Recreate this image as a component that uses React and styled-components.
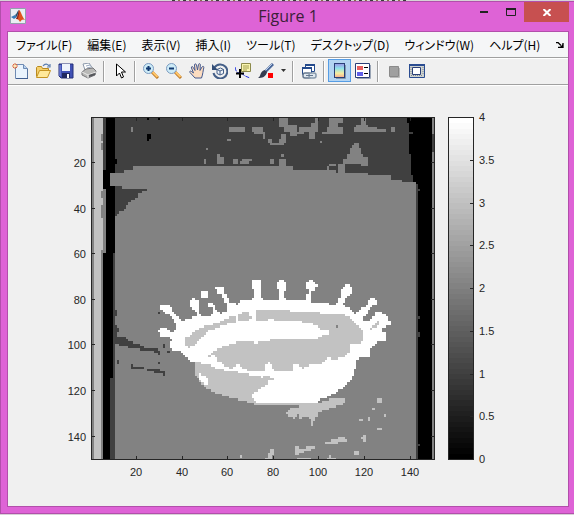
import React from "react";
import styled, { createGlobalStyle } from "styled-components";

const GlobalStyle = createGlobalStyle`
  * { box-sizing: border-box; }
  body { margin: 0; background: #d6d3d6; }
  button { font: inherit; color: inherit; border: 0; padding: 0; background: none; }
`;

const Desktop = styled.div`
  display: flex;
  flex-direction: column;
  min-height: 100vh;
  padding-bottom: 1px;
`;

/* sliver of the window behind, with the feet of its title text */
const BackWindow = styled.div`
  height: 1px;
  margin: 0 29% 0 30%;
  background: repeating-linear-gradient(90deg, #3a3a3a 0 3px, #d6d3d6 3px 6px, #8a6a4a 6px 8px, #d6d3d6 8px 11px);
`;

const Window = styled.main`
  flex: 1;
  display: flex;
  flex-direction: column;
  background: #de63d6;
  border: 1px solid #b24fab;
  border-right-width: 0;
  padding: 0 5px 6px 6px;
`;

const TitleBar = styled.header`
  display: grid;
  grid-template-columns: 1fr auto 1fr;
  align-items: start;
  height: 29px;
`;

const AppIcon = styled.span`
  display: flex;
  margin: 6px 0 0 3px;
`;

const Title = styled.h1`
  margin: 0;
  font: 400 16px/29px "Open Sans", "Noto Sans", sans-serif;
  color: #3c2039;
`;

const WindowButtons = styled.div`
  display: flex;
  justify-content: flex-end;
`;

const WindowButton = styled.button`
  display: flex;
  align-items: center;
  justify-content: center;
  width: ${(p) => (p.$close ? 45 : 27)}px;
  height: 20px;
  background: ${(p) => (p.$close ? "#c75050" : "transparent")};
`;

const Client = styled.div`
  flex: 1;
  display: flex;
  flex-direction: column;
  background: #f0f0f0;
  border: 1px solid #b24fab;
`;

const MenuBar = styled.nav`
  display: flex;
  align-items: center;
  height: 26px;
  padding: 0 4px 0 8px;
  background: #f5f6f7;
  border-bottom: 1px solid #a0a0a0;
`;

const MenuItem = styled.button`
  margin-right: 15px;
  font: 12px/24px "Noto Sans CJK JP", sans-serif;
  font-feature-settings: "palt";
  white-space: nowrap;
  color: #000;
`;

const DockButton = styled.button`
  display: flex;
  margin-left: auto;
`;

const ToolBar = styled.div`
  display: flex;
  align-items: flex-start;
  height: 27px;
  border-top: 1px solid #fff;
  border-bottom: 1px solid #a0a0a0;
`;

const ToolButton = styled.button`
  display: flex;
  align-items: center;
  justify-content: center;
  width: 23px;
  height: 23px;
  background: ${(p) => (p.$active ? "#b3d4f2" : "transparent")};
  border: 1px solid ${(p) => (p.$active ? "#569de5" : "transparent")};
`;

const CaretButton = styled(ToolButton)`
  width: 12px;
`;

const Separator = styled.span`
  width: 2px;
  height: 21px;
  margin: 2px 3px;
  background: #a0a0a0;
  border-right: 1px solid #fff;
`;

const Figure = styled.section`
  flex: 1;
  padding: 20px 0 0 52px;
  border-top: 1px solid #fff;
`;

const Chart = styled.svg`
  display: block;
  width: 440px;
  max-width: 100%;
  font: 11px "Liberation Sans", sans-serif;
`;

/* ---------- segmented image ---------- */

const SIZE = 150;
const CELL = 6.84;
const GRAYS = ["#000000", "#404040", "#828282", "#c2c2c2", "#ffffff"];
const layers = [];
const rects = (level, dx, dy, list) =>
  list.forEach(([x, y, w, h]) =>
    layers.push({ level, pts: [[x + dx, y + dy], [x + w + dx, y + dy], [x + w + dx, y + h + dy], [x + dx, y + h + dy]] })
  );
const poly = (level, dy, text) =>
  layers.push({
    level,
    pts: text.split(" ").map((s) => {
      const [x, y] = s.split(",").map(Number);
      return [x, y + dy];
    }),
  });

rects(2, 0, 0, [[21, 24, 1026, 1026]]);
poly(1, 0, "84,24 84,186 117,186 117,180 144,180 144,171 336,171 336,165 603,165 603,171 624,171 624,180 753,180 753,186 849,186 849,192 885,192 885,198 918,198 918,207 951,207 951,213 993,213 993,24");
rects(1, 0, 0, [[411, 165, 12, 6], [492, 165, 15, 6], [993, 213, 6, 840], [54, 24, 6, 162], [75, 804, 12, 250], [81, 430, 6, 400]]);
poly(0, 0, "963,24 963,36 969,36 969,63 972,75 972,132 981,132 981,198 987,198 987,213 993,213 993,219 999,219 999,1050 1041,1050 1041,24");
rects(0, 0, 0, [[60, 24, 27, 162], [54, 184, 21, 50], [60, 230, 27, 200], [54, 430, 27, 374], [54, 804, 21, 250]]);
rects(3, 0, 0, [[27, 24, 27, 400], [27, 424, 21, 630]]);
rects(2, 0, 0, [[48, 75, 6, 15], [48, 102, 6, 20], [48, 240, 6, 20], [48, 282, 6, 40], [54, 240, 6, 190]]);
rects(1, 0, 0, [[1041, 75, 6, 55], [972, 63, 15, 12], [999, 234, 9, 12], [999, 618, 8, 6], [999, 666, 9, 15], [999, 1002, 9, 6]]);
poly(1, 0, "87,228 108,228 108,234 183,234 183,240 168,247 156,247 156,260 144,270 130,282 117,300 87,320");
rects(0, 0, 0, [[183, 75, 15, 8], [183, 82, 9, 8], [87, 144, 9, 15], [102, 165, 6, 6], [183, 24, 9, 4], [219, 24, 6, 4], [945, 69, 6, 6]]);

rects(2, 0, 0, [
  [135, 54, 9, 9], [432, 54, 28, 9], [459, 48, 21, 20], [501, 54, 35, 9], [507, 62, 33, 7], [423, 84, 15, 6], [405, 96, 6, 6],
  [363, 111, 6, 6], [453, 117, 6, 6], [357, 144, 6, 15], [396, 132, 9, 28], [405, 138, 12, 22], [444, 150, 15, 9],
  [465, 156, 25, 8], [480, 144, 20, 8], [472, 150, 18, 8],
]);
rects(2, 525, 0, [
  [57, 24, 27, 30], [72, 42, 38, 20], [93, 54, 20, 26], [110, 62, 20, 8], [118, 50, 45, 16], [155, 40, 18, 25], [165, 24, 10, 24],
  [147, 66, 20, 18], [205, 24, 42, 12], [210, 36, 24, 36], [201, 50, 45, 22], [187, 66, 14, 8], [0, 66, 8, 8], [8, 74, 8, 10],
  [22, 84, 14, 12], [30, 96, 42, 13], [55, 88, 23, 14], [64, 72, 13, 20], [180, 90, 6, 12], [303, 24, 12, 24], [280, 48, 45, 14],
  [290, 42, 36, 8], [325, 50, 25, 12], [345, 55, 33, 8], [393, 54, 15, 8], [283, 96, 15, 12], [275, 108, 22, 8], [270, 116, 32, 16],
  [265, 132, 45, 8], [265, 138, 58, 20], [250, 150, 50, 14], [235, 164, 20, 22], [300, 158, 24, 7], [207, 158, 22, 7],
  [222, 165, 7, 6], [201, 170, 7, 9], [63, 132, 9, 6], [30, 150, 15, 12], [36, 145, 6, 8], [24, 158, 12, 6], [55, 150, 23, 20], [45, 158, 10, 6],
]);
rects(1, 525, 0, [[300, 165, 17, 15]]);

poly(1, 480, "87,200 115,200 132,210 150,220 180,232 220,238 222,248 195,244 150,236 110,228 87,218");
rects(1, 0, 480, [
  [84, 117, 12, 20], [84, 165, 10, 38], [94, 175, 12, 10], [94, 267, 8, 14], [135, 283, 12, 14], [147, 290, 30, 7], [183, 298, 42, 7],
  [207, 304, 33, 5], [232, 304, 8, 10], [219, 276, 6, 6], [219, 123, 6, 8], [231, 218, 9, 15], [219, 245, 6, 9], [246, 240, 6, 8],
]);

/* crown outline */
poly(4, 480, "252,237 252,216 262,207 252,204 225,200 222,178 232,172 252,178 260,190 268,186 276,176 276,164 262,146 250,132 232,126 225,112 232,105 252,105 260,120 270,132 282,146 294,156 310,146 333,140 333,124 315,112 315,92 325,87 340,92 340,110 346,132 360,140 385,132 384,118 370,106 375,96 385,102 396,122 408,132 424,122 424,104 415,86 412,76 396,68 393,54 402,48 415,52 420,66 428,86 438,100 456,102 470,92 507,87 507,68 501,54 501,27 524,27 528,85 535,92 585,92 585,66 576,56 576,38 590,30 602,38 602,58 597,66 600,92 660,92 663,74 672,62 663,50 663,38 675,28 684,34 697,46 692,60 678,68 678,96 730,98 740,104 755,104 760,92 768,80 768,60 776,48 795,44 801,66 790,80 778,90 774,106 790,110 803,120 808,134 825,118 836,112 848,106 848,90 862,84 876,92 872,106 856,110 848,126 836,140 840,158 855,150 866,140 866,128 880,122 895,130 906,140 918,156 912,168 894,174 890,182 902,190 902,212 880,214 868,226 855,240 852,260 820,262 816,272 816,290 806,300 804,320 795,332 780,346 760,364 740,376 700,390 690,402 510,403 465,390 420,378 385,366 360,352 345,335 327,310 327,276 310,272 300,258 280,240");
poly(4, 480, "348,68 355,60 365,62 372,74 364,86 352,82");
/* shaded rim, dish and body */
poly(3, 480, "300,228 300,204 315,198 327,186 345,174 370,166 400,158 425,144 452,138 452,158 420,164 395,174 370,184 352,198 340,212 325,226 315,233");
poly(3, 480, "459,138 470,128 490,123 492,134 504,140 492,148 480,156 460,156");
poly(3, 480, "513,118 613,118 615,123 700,124 705,132 772,132 790,140 805,150 815,165 830,180 836,192 836,208 826,222 795,222 794,246 780,258 760,266 738,266 730,262 720,268 705,286 680,284 662,290 655,296 645,286 625,286 625,302 567,302 560,285 550,276 540,290 540,300 534,306 475,298 458,282 440,296 415,285 400,272 388,256 370,262 390,240 430,224 465,213 498,214 510,222 525,216 540,213 595,204 700,206 705,198 732,192 732,180 708,178 700,168 670,160 635,152 590,152 560,148 530,152 513,150");
poly(3, 480, "327,276 370,282 395,298 440,302 475,310 510,316 530,322 540,318 570,324 582,324 550,330 545,345 520,360 503,372 503,386 516,397 690,397 690,403 510,403 465,390 420,378 385,366 360,352 345,335 327,310");
poly(4, 480, "336,306 350,312 368,326 370,344 360,344 345,328");
poly(3, 480, "855,180 865,165 882,153 886,164 870,172 862,180");
rects(2, 510, 480, [[243, 165, 6, 6]]);

/* splashes under the crown */
poly(3, 480, "597,432 610,420 620,412 650,408 700,400 720,390 770,384 780,390 775,402 740,412 720,420 700,426 698,440 688,450 684,470 678,470 676,445 662,436 648,446 640,432 630,446");
rects(3, -75, 870, [
  [797, 123, 35, 9], [815, 118, 50, 7], [832, 111, 25, 8], [705, 142, 14, 22], [719, 145, 35, 8], [719, 150, 14, 8], [740, 138, 27, 8],
  [630, 148, 10, 20], [622, 158, 12, 14], [540, 165, 6, 9], [882, 153, 14, 10], [910, 105, 7, 20], [904, 112, 6, 6], [952, 84, 14, 6],
  [898, 60, 12, 6], [924, 52, 6, 10], [972, 42, 6, 8], [938, 22, 6, 8], [952, -6, 14, 14], [615, 173, 20, 6], [710, 173, 40, 6],
  [800, 173, 30, 6], [808, 165, 8, 8],
]);

function inside(pts, x, y) {
  let hit = false;
  for (let i = 0, j = pts.length - 1; i < pts.length; j = i++) {
    const [xi, yi] = pts[i];
    const [xj, yj] = pts[j];
    if (yi > y !== yj > y && x < ((xj - xi) * (y - yi)) / (yj - yi) + xi) hit = !hit;
  }
  return hit;
}

function rasterise() {
  const paths = GRAYS.map(() => "");
  const grid = new Uint8Array(SIZE * SIZE);
  layers.forEach(({ level, pts }) => {
    const xs = pts.map((p) => p[0]);
    const ys = pts.map((p) => p[1]);
    const c0 = Math.max(0, Math.floor((Math.min(...xs) - 21) / CELL));
    const c1 = Math.min(SIZE - 1, Math.ceil((Math.max(...xs) - 21) / CELL));
    const r0 = Math.max(0, Math.floor((Math.min(...ys) - 24) / CELL));
    const r1 = Math.min(SIZE - 1, Math.ceil((Math.max(...ys) - 24) / CELL));
    for (let r = r0; r <= r1; r++)
      for (let c = c0; c <= c1; c++)
        if (inside(pts, 21 + (c + 0.5) * CELL, 24 + (r + 0.5) * CELL)) grid[r * SIZE + c] = level;
  });
  for (let r = 0; r < SIZE; r++) {
    let start = 0;
    for (let c = 1; c <= SIZE; c++) {
      if (c === SIZE || grid[r * SIZE + c] !== grid[r * SIZE + start]) {
        paths[grid[r * SIZE + start]] += `M${start} ${r}h${c - start}v1h${start - c}z`;
        start = c;
      }
    }
  }
  return paths;
}

const levelPaths = rasterise();
const TICKS = [20, 40, 60, 80, 100, 120, 140];
const BAR_TICKS = [0, 0.5, 1, 1.5, 2, 2.5, 3, 3.5, 4];
const tickX = (v) => Math.floor(92 + (v - 0.5) * 2.28);
const tickY = (v) => Math.floor(118 + (v - 0.5) * 2.28);

function Plot() {
  return (
    <Chart viewBox="60 106 440 380" role="img" aria-label="Segmented image with colorbar">
      <g transform="translate(92 118) scale(2.28)" shapeRendering="crispEdges">
        {levelPaths.map((d, i) => (
          <path key={i} d={d} fill={GRAYS[i]} />
        ))}
      </g>
      <g shapeRendering="crispEdges" stroke="#262626" fill="none">
        <rect x="91.5" y="117.5" width="343" height="342" />
        {TICKS.map((v) => (
          <path key={v} d={`M${tickX(v) + 0.5} 459v-3M${tickX(v) + 0.5} 118v3M92 ${tickY(v) + 0.5}h3M434 ${tickY(v) + 0.5}h-3`} />
        ))}
      </g>
      <g fill="#262626">
        {TICKS.map((v) => (
          <React.Fragment key={v}>
            <text x={tickX(v)} y="476" textAnchor="middle">{v}</text>
            <text x="86" y={tickY(v) + 5} textAnchor="end">{v}</text>
          </React.Fragment>
        ))}
      </g>
      <g shapeRendering="crispEdges">
        {Array.from({ length: 64 }, (_, i) => {
          const g = Math.round(((63 - i) / 63) * 255);
          return <rect key={i} x="449" y={118 + i * 5.33} width="25" height="6" fill={`rgb(${g},${g},${g})`} />;
        })}
        <rect x="448.5" y="117.5" width="25" height="342" fill="none" stroke="#262626" />
        {BAR_TICKS.map((v) => (
          <path key={v} d={`M473 ${Math.round(459 - v * 85.5) + 0.5}h-3`} stroke="#262626" />
        ))}
      </g>
      <g fill="#262626">
        {BAR_TICKS.map((v) => (
          <text key={v} x="479" y={Math.round(463 - v * 85.5)}>{v}</text>
        ))}
      </g>
    </Chart>
  );
}

/* ---------- icons ---------- */

const Icon = ({ children, size = 16, h }) => (
  <svg width={size} height={h || size} viewBox={`0 0 ${size} ${h || size}`} aria-hidden="true">
    {children}
  </svg>
);

const icons = {
  new: (
    <Icon>
      <path d="M3.5 1.5h8l4 4v10h-12z" fill="#e9f3fd" stroke="#6f8bb3" />
      <path d="M11.5 1.5v4h4" fill="#b9d2ee" stroke="#6f8bb3" />
      <path d="M4 15.5h12V6" fill="none" stroke="#3f5e90" />
      <path d="M3 0v6M0 3h6M1 1l4 4M5 1L1 5" stroke="#e0683c" />
      <circle cx="3" cy="3" r="1.3" fill="#ffe9b0" />
    </Icon>
  ),
  open: (
    <Icon>
      <path d="M1.5 13.5v-9l1-1h4l1 2h6v3" fill="#f5d06c" stroke="#b98a20" />
      <path d="M1.5 14.5l3-7h11l-3 7z" fill="#ffe99a" stroke="#c59422" />
      <path d="M8 3c2-3 5-2 6 0M15 1v3h-3" fill="none" stroke="#5c7fb0" strokeWidth="1.2" />
    </Icon>
  ),
  save: (
    <Icon>
      <path d="M1 1h14v14H3l-2-2z" fill="#3f50b4" stroke="#242f78" />
      <path d="M4 1h8v7H4z" fill="#edf2fb" />
      <path d="M4 10h8v5H4z" fill="#1f2861" />
      <path d="M9 11h2v4H9z" fill="#fff" />
      <path d="M2 2v11" stroke="#8d9be6" />
    </Icon>
  ),
  print: (
    <Icon>
      <path d="M4 7l-2-6 6-1 4 6z" fill="#fff" stroke="#8b98aa" />
      <path d="M5 3l4-1M6 5l4-1" stroke="#98a8c0" />
      <path d="M1 9l4-3 7-1 3 3-1 4-7 3-6-3z" fill="#b8b8b6" stroke="#77777a" />
      <path d="M1 9l6 3 8-3M7 12v3" fill="none" stroke="#e8e8e8" />
      <path d="M8 13l6-2" stroke="#55575c" strokeWidth="2" />
    </Icon>
  ),
  arrow: (
    <Icon>
      <path d="M4.5 1v12l3-3 2 5 2-1-2-5h4z" fill="#fff" stroke="#000" />
    </Icon>
  ),
  hand: (
    <Icon>
      <path d="M6 15L1 9.500c-1-1 .5-2 1.500-1l2 1.500L2.500 5c-.5-1.500 1-2 1.600-.7L6 7.500 5.500 2c0-1.500 1.700-1.500 2 0L8.500 7l1-5.500c.3-1.300 2-1 1.800.4L11 7.500 13 4c.7-1.200 2.300-.6 1.800.7C14 7.500 14 11 12.500 15z" fill="#fcdcc0" stroke="#44598e" />
    </Icon>
  ),
  rotate: (
    <Icon>
      <path d="M2.5 4.5A7 7 0 1 1 1.500 10" fill="none" stroke="#445f88" strokeWidth="2" />
      <path d="M0 1v6h6z" fill="#334e78" />
      <path d="M5 6.500l3.500-1.500 3 1.500v4L8 12l-3-1.500zM5 6.500L8 8l3.500-1.500M8 8v4" fill="#f0f5fb" stroke="#445f88" />
    </Icon>
  ),
  cursor: (
    <Icon>
      <path d="M6.500.5h9v8h-9z" fill="#faf5b0" stroke="#8c8a4b" />
      <path d="M8 3h6M8 5h6M8 7h4" stroke="#a39f55" />
      <path d="M0 4q1 6 4 6t6 3l5 2" fill="none" stroke="#2030e0" strokeDasharray="4 1" />
      <path d="M5 6v9M1 10.500h8" stroke="#000" strokeWidth="2" />
    </Icon>
  ),
  brush: (
    <Icon>
      <path d="M15 1L7 9" stroke="#4a6799" strokeWidth="3" />
      <path d="M14 1L7 8" stroke="#bdd0ea" />
      <path d="M7 7l2 2c-1 5-5 6-9 6 2-1 2-3 3-5s3-3 4-3z" fill="#343c50" />
      <path d="M10 10h5v5h-5z" fill="#f00" />
    </Icon>
  ),
  caret: (
    <Icon size={5} h={3}>
      <path d="M0 0h5L2.500 3z" fill="#333" />
    </Icon>
  ),
  link: (
    <Icon>
      <path d="M4.500 1.500h9v7h-9z" fill="#fff" stroke="#244a8c" />
      <path d="M4 2h10" stroke="#244a8c" strokeWidth="2" />
      <path d="M1.500 4.500h9v7h-9z" fill="#fff" stroke="#244a8c" />
      <path d="M1 5h10" stroke="#244a8c" strokeWidth="2" />
      <rect x="2" y="10" width="8" height="5" rx="2" fill="#dfe7ee" stroke="#65788f" strokeWidth="1.500" />
      <rect x="8" y="10" width="7" height="5" rx="2" fill="#dfe7ee" stroke="#8799ac" strokeWidth="1.500" />
      <path d="M5 12.500h7" stroke="#65788f" />
    </Icon>
  ),
  colorbar: (
    <Icon>
      <defs>
        <linearGradient id="spectrum" x1="0" x2="0" y1="0" y2="1">
          <stop offset="0" stopColor="#9a92e6" />
          <stop offset="0.35" stopColor="#8fe3ea" />
          <stop offset="0.7" stopColor="#f5eda0" />
          <stop offset="1" stopColor="#f7ab8e" />
        </linearGradient>
      </defs>
      <path d="M4 15.500h9.500V2" fill="none" stroke="#8299ad" />
      <rect x="2.500" y=".5" width="10" height="14" fill="url(#spectrum)" stroke="#2a3f77" />
    </Icon>
  ),
  legend: (
    <Icon>
      <path d="M.5.500h14v14H.5z" fill="#fff" stroke="#2a3f77" />
      <path d="M2 15.500h13.500V2" fill="none" stroke="#9aa5b5" />
      <path d="M2 3h6v4H2z" fill="#e85f5f" />
      <path d="M2 9h6v4H2z" fill="#6060e8" />
      <path d="M9 4.500h4M9 10.500h4" stroke="#000" />
    </Icon>
  ),
  hide: (
    <Icon>
      <path d="M4 14.500h9.500V5" fill="none" stroke="#bbb" />
      <path d="M3.500 3.500h9v10h-9z" fill="#a0a0a0" stroke="#8a8a8a" />
    </Icon>
  ),
  show: (
    <Icon>
      <path d="M.5 1.500h15v13H.5z" fill="#cfd3cf" stroke="#2a4c91" />
      <path d="M0 2h16" stroke="#2a4c91" strokeWidth="2" />
      <path d="M3.500 4.500h8v7h-8z" fill="#fff" stroke="#2a3f77" />
      <path d="M2 12.500h12M2 4v8M14 4v8" stroke="#7d8791" strokeDasharray="1 1" />
    </Icon>
  ),
};

const Zoom = ({ plus }) => (
  <Icon>
    <path d="M9 9l6 6" stroke="#b87423" strokeWidth="3" />
    <path d="M9.500 9l5 5" stroke="#ffc568" strokeWidth="2" />
    <circle cx="5.500" cy="5.500" r="5" fill="#cdebf7" stroke="#7c9bc0" />
    <path d={plus ? "M3 5.500h5M5.500 3v5" : "M3 5.500h5"} stroke="#123a72" strokeWidth="2" />
  </Icon>
);
icons.zoomIn = <Zoom plus />;
icons.zoomOut = <Zoom />;

const TOOLS = [
  ["new", "New Figure"], ["open", "Open File"], ["save", "Save Figure"], ["print", "Print Figure"], null,
  ["arrow", "Edit Plot"], null,
  ["zoomIn", "Zoom In"], ["zoomOut", "Zoom Out"], ["hand", "Pan"], ["rotate", "Rotate 3D"], ["cursor", "Data Cursor"],
  ["brush", "Brush"], ["caret", "Brush options"], null,
  ["link", "Link Plot"], null,
  ["colorbar", "Insert Colorbar"], ["legend", "Insert Legend"], null,
  ["hide", "Hide Plot Tools"], ["show", "Show Plot Tools"],
];

const MENUS = ["ファイル(F)", "編集(E)", "表示(V)", "挿入(I)", "ツール(T)", "デスクトップ(D)", "ウィンドウ(W)", "ヘルプ(H)"];

export default function App() {
  return (
    <Desktop>
      <GlobalStyle />
      <BackWindow />
      <Window>
        <TitleBar>
          <AppIcon>
            <Icon>
              <path d="M.5.500h15v15H.5z" fill="#e9eef3" stroke="#93a0ae" />
              <path d="M1 9l4-2 2 2-3 2z" fill="#377cb7" />
              <path d="M5 7c2-1 2-4 4-5L7 9z" fill="#27506f" />
              <path d="M9 2c2 1 3 7 6 10-2-1-3-1-5 2-1-2-2-3-4-3 2-2 2-6 3-9z" fill="#e0531d" />
              <path d="M9 2c1 3-1 8-1 9l-2 0c2-3 2-6 3-9z" fill="#8d241a" />
            </Icon>
          </AppIcon>
          <Title>Figure 1</Title>
          <WindowButtons>
            <WindowButton aria-label="Minimize">
              <Icon size={8} h={2}><path d="M0 0h8v2H0z" fill="#222" /></Icon>
            </WindowButton>
            <WindowButton aria-label="Maximize">
              <Icon size={10} h={8}><path d="M.5 1v6.500h9V1M0 1h10" fill="none" stroke="#222" /><path d="M0 0h10v2H0z" fill="#222" /></Icon>
            </WindowButton>
            <WindowButton aria-label="Close" $close>
              <Icon size={8} h={7}><path d="M.5 0l7 7M7.500 0l-7 7" stroke="#fff" strokeWidth="2" /></Icon>
            </WindowButton>
          </WindowButtons>
        </TitleBar>
        <Client>
          <MenuBar>
            {MENUS.map((m) => <MenuItem key={m}>{m}</MenuItem>)}
            <DockButton aria-label="Dock figure">
              <Icon size={8} h={6}><path d="M0 .500h2l3 3M2 5.500h5V1" fill="none" stroke="#000" strokeWidth="1.300" /><path d="M3 6h4V2z" /></Icon>
            </DockButton>
          </MenuBar>
          <ToolBar>
            {TOOLS.map((t, i) => {
              if (!t) return <Separator key={i} />;
              const Button = t[0] === "caret" ? CaretButton : ToolButton;
              return <Button key={i} aria-label={t[1]} $active={t[0] === "colorbar"}>{icons[t[0]]}</Button>;
            })}
          </ToolBar>
          <Figure><Plot /></Figure>
        </Client>
      </Window>
    </Desktop>
  );
}
